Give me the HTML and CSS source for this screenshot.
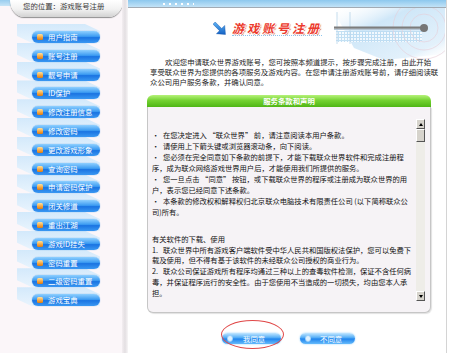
FILE: index.html
```html
<!DOCTYPE html>
<html lang="zh-CN">
<head>
<meta charset="utf-8">
<title>游戏账号注册</title>
<link rel="stylesheet" href="styles.css">
</head>
<body>
<div class="page">
  <aside class="sidebar">
    <div class="location"><div class="loc-tab">您的位置：游戏账号注册</div></div>
    <ul class="menu">
      <li><span class="dot"></span>用户指南</li>
      <li><span class="dot"></span>账号注册</li>
      <li><span class="dot"></span>靓号申请</li>
      <li><span class="dot"></span>ID保护</li>
      <li><span class="dot"></span>修改注册信息</li>
      <li><span class="dot"></span>修改密码</li>
      <li><span class="dot"></span>更改游戏形象</li>
      <li><span class="dot"></span>查询密码</li>
      <li><span class="dot"></span>申请密码保护</li>
      <li><span class="dot"></span>闭关修道</li>
      <li><span class="dot"></span>重出江湖</li>
      <li><span class="dot"></span>游戏ID挂失</li>
      <li><span class="dot"></span>密码重置</li>
      <li><span class="dot"></span>二级密码重置</li>
      <li><span class="dot"></span>游戏宝典</li>
    </ul>
  </aside>
  <div class="divider"></div>
  <main class="main">
    <div class="topbar"><span class="dots"></span></div>
    <div class="title-row">
      <svg class="arrow" width="13" height="13" viewBox="0 0 12 12">
        <defs>
          <linearGradient id="ag" x1="0" y1="0" x2="0" y2="1">
            <stop offset="0" stop-color="#5fb4f5"/>
            <stop offset="1" stop-color="#1462c4"/>
          </linearGradient>
        </defs>
        <polygon points="0,2 2,0 8,6 10.8,3.2 11.5,11.5 3.2,10.8 6,8" fill="url(#ag)" stroke="#0d4fa8" stroke-width="0.4"/>
      </svg>
      <h1 class="title">游戏账号注册</h1>
      <svg class="deco" width="121" height="52" viewBox="0 0 121 52">
        <defs>
          <linearGradient id="sweep" x1="0" y1="0" x2="1" y2="1">
            <stop offset="0" stop-color="#ffffff" stop-opacity="0"/>
            <stop offset="0.35" stop-color="#cfe7f8"/>
            <stop offset="0.8" stop-color="#e3f1fb"/>
            <stop offset="1" stop-color="#ffffff" stop-opacity="0"/>
          </linearGradient>
          <pattern id="grid" width="3" height="3" patternUnits="userSpaceOnUse">
            <rect width="3" height="3" fill="#bcdcf2"/>
            <rect width="2" height="2" fill="#f4faff"/>
          </pattern>
        </defs>
        <polygon points="8,0 121,0 121,46 60,52 30,40" fill="url(#sweep)"/>
        <rect x="12" y="23" width="86" height="11" fill="url(#grid)" opacity="0.9"/>
        <line x1="13" y1="4" x2="13" y2="36" stroke="#b9d5ea" stroke-width="0.8"/>
        <line x1="26" y1="4" x2="26" y2="36" stroke="#b9d5ea" stroke-width="0.8"/>
        <circle cx="100" cy="20" r="14" fill="none" stroke="#e6cdd6" stroke-width="0.6"/>
        <circle cx="100" cy="20" r="22" fill="none" stroke="#e6cdd6" stroke-width="0.6"/>
        <circle cx="100" cy="20" r="31" fill="none" stroke="#e6cdd6" stroke-width="0.6"/>
        <rect x="10" y="18.5" width="88" height="2.2" fill="#7d7d7d"/>
        <rect x="10" y="21" width="88" height="1" fill="#b7c7d6"/>
        <circle cx="100" cy="20" r="4" fill="#767676"/>
      </svg>
    </div>
    <p class="intro">欢迎您申请联众世界游戏账号，您可按照本频道提示，按步骤完成注册，由此开始<br>享受联众世界为您提供的各项服务及游戏内容。在您申请注册游戏账号前，请仔细阅读联<br>众公司用户服务条款，并确认同意。</p>
    <section class="terms">
      <div class="terms-head">服务条款和声明</div>
      <div class="terms-body">
        <div class="terms-text">
          <div class="group">
            <div class="line">&nbsp;</div>
            <div class="line"><span class="b">•</span>在您决定进入 “联众世界” 前，请注意阅读本用户条款。</div>
            <div class="line"><span class="b">•</span>请使用上下箭头键或浏览器滚动条，向下阅读。</div>
            <div class="line"><span class="b">•</span>您必须在完全同意如下条款的前提下，才能下载联众世界软件和完成注册程</div>
            <div class="line">序，成为联众网络游戏世界用户后，才能使用我们所提供的服务。</div>
            <div class="line"><span class="b">•</span>您一旦点击 “同意” 按钮，或下载联众世界的程序或注册成为联众世界的用</div>
            <div class="line">户，表示您已经同意下述条款。</div>
            <div class="line"><span class="b">•</span>本条款的修改权和解释权归北京联众电脑技术有限责任公司 (以下简称联众公</div>
            <div class="line">司)所有。</div>
          </div>
          <div class="group second">
            <div class="line">有关软件的下载、使用</div>
            <div class="line"><span class="b">1.</span>联众世界中所有游戏客户端软件受中华人民共和国版权法保护，您可以免费下</div>
            <div class="line">载及使用，但不得有基于该软件的未经联众公司授权的商业行为。</div>
            <div class="line"><span class="b">2.</span>联众公司保证游戏所有程序均通过三种以上的查毒软件检测，保证不含任何病</div>
            <div class="line">毒，并保证程序运行的安全性。由于您使用不当造成的一切损失，均由您本人承</div>
            <div class="line">担。</div>
          </div>
        </div>
        <div class="scrollbar">
          <div class="sb-btn"><span class="tri up"></span></div>
          <div class="sb-thumb"></div>
          <div class="sb-track"></div>
          <div class="sb-btn"><span class="tri down"></span></div>
        </div>
      </div>
    </section>
    <div class="actions">
      <button class="btn agree"><span class="bicon"></span>我同意</button>
      <button class="btn disagree"><span class="bicon"></span>不同意</button>
    </div>
  </main>
</div>
</body>
</html>
```

FILE: styles.css
```css
* { box-sizing: border-box; }
html, body {
  margin: 0;
  padding: 0;
  background: #ffffff;
}
body {
  width: 450px;
  height: 353px;
  overflow: hidden;
  font-family: "Noto Sans CJK SC", "Noto Sans", sans-serif;
  color: #111;
}
.page {
  display: flex;
  height: 353px;
}

/* ---------- sidebar ---------- */
.sidebar {
  width: 122px;
  flex: none;
  background: #fbf6f9;
}
.location {
  height: 19px;
  padding-left: 10px;
  background: linear-gradient(to bottom, #98cdef 0, #c7e5f7 6px, #fbf6f9 6px);
}
.loc-tab {
  height: 17px;
  width: 113px;
  padding-left: 13px;
  border-radius: 0 0 14px 14px / 0 0 17px 17px;
  background: linear-gradient(to bottom, #ffffff 0, #f1f1f1 55%, #d2d2d2 100%);
  box-shadow: 0 1px 1px #8e8e8e;
  font-size: 7.4px;
  line-height: 12px;
  color: #3a3a3a;
  white-space: nowrap;
}
.menu {
  list-style: none;
  margin: 0;
  padding: 12px 0 0 32px;
  position: relative;
  z-index: 0;
}
.menu li {
  position: relative;
  display: flex;
  align-items: center;
  gap: 5px;
  width: 68px;
  height: 12px;
  margin-bottom: 6.8px;
  padding-left: 5px;
  border-radius: 6px;
  background: linear-gradient(to bottom, #8fd0ff 0, #3d9cf2 45%, #1a74e2 55%, #3a98f2 100%);
  box-shadow: 0 0 1px #3f8fe0;
  color: #ffffff;
  font-size: 7.4px;
  line-height: 12px;
  white-space: nowrap;
}
.menu li::before {
  content: "";
  position: absolute;
  left: -15px;
  top: -7px;
  width: 83px;
  height: 19px;
  background: linear-gradient(to bottom, #d3e9fb, #e9f4fd);
  clip-path: polygon(0 0, 68px 0, 83px 7px, 83px 19px, 15px 19px, 0 12px);
  z-index: -1;
}
.dot {
  width: 6px;
  height: 6px;
  flex: none;
  border-radius: 1.5px;
  background: linear-gradient(to bottom, #ffe2a0, #f4a23a 60%, #e07c10);
}

.divider {
  width: 6px;
  flex: none;
  background: linear-gradient(to right, #f3eef1, #e3dfe2 50%, #f7f5f6);
}

/* ---------- main ---------- */
.main {
  width: 319px;
  flex: none;
  border-right: 1px solid #d4d4d4;
}
.topbar {
  height: 8px;
  padding-top: 3px;
  background: linear-gradient(to bottom, #8dc8ee, #c2e3f7);
  border-bottom: 1px solid #a2abb4;
}
.dots {
  display: block;
  width: 31px;
  height: 2px;
  margin-left: 35px;
  background: repeating-linear-gradient(to right, #ffffff 0 1.5px, transparent 1.5px 6px);
}
.title-row {
  display: flex;
  align-items: center;
  height: 40px;
  padding-left: 85px;
}
.arrow {
  flex: none;
  margin-right: 6px;
}
.title {
  margin: 0;
  font-size: 12px;
  line-height: 13px;
  font-weight: 700;
  font-style: italic;
  letter-spacing: 3px;
  color: #ec3b2e;
  border-bottom: 1px dotted #8cc6ee;
  padding-bottom: 1px;
  white-space: nowrap;
  text-shadow: -1px 0 #fff, 1px 0 #fff, 0 -1px #fff, 0 1px #fff, 1px 1px 1px #b84a44;
}
.deco {
  flex: none;
  align-self: flex-start;
  margin-left: auto;
  margin-right: 1px;
}
.intro {
  margin: 9px 0 0 22px;
  font-size: 7.4px;
  line-height: 10px;
  text-indent: 15px;
  color: #222;
  white-space: nowrap;
}

.terms {
  width: 284px;
  margin: 8px 0 0 19px;
}
.terms-head {
  height: 12px;
  border-radius: 6px 6px 0 0;
  background: linear-gradient(to bottom, #b6f27a 0, #74d232 45%, #4fb615 100%);
  color: #ffffff;
  font-size: 7.4px;
  font-weight: 700;
  line-height: 12px;
  text-align: center;
}
.terms-body {
  display: flex;
  height: 206px;
  padding: 12px 5px 0 4px;
  border: 1px solid #c6c6c6;
  border-top: none;
  border-radius: 0 0 6px 6px;
  background: #f6f3f6;
  box-shadow: 1px 1px 1px #e2e2e2;
}
.terms-text {
  flex: 1;
  overflow: hidden;
  font-size: 7.3px;
  line-height: 11px;
  color: #111;
  white-space: nowrap;
}
.group.second {
  margin-top: 16px;
  line-height: 10.7px;
}
.b {
  display: inline-block;
  width: 11px;
}
.scrollbar {
  display: flex;
  flex-direction: column;
  width: 9px;
  height: 182px;
  flex: none;
}
.sb-btn, .sb-thumb {
  background: #d6d3cc;
  border: 1px solid;
  border-color: #ffffff #555555 #555555 #ffffff;
}
.sb-btn {
  height: 10px;
  display: flex;
  align-items: center;
  justify-content: center;
}
.sb-thumb {
  height: 13px;
}
.sb-track {
  flex: 1;
  background: #eeede8;
}
.tri {
  width: 0;
  height: 0;
  border-left: 2.5px solid transparent;
  border-right: 2.5px solid transparent;
}
.tri.up { border-bottom: 3px solid #000; }
.tri.down { border-top: 3px solid #000; }

/* ---------- buttons ---------- */
.actions {
  display: flex;
  gap: 19px;
  margin: 20px 0 0 94px;
}
.btn {
  display: flex;
  align-items: center;
  gap: 7px;
  height: 11px;
  padding: 0 0 0 5px;
  border: none;
  border-radius: 6px;
  background: linear-gradient(to bottom, #c2e6ff 0, #5ab1f7 40%, #2185ee 55%, #66bbfb 100%);
  box-shadow: 0 0 2px #8ccdfd;
  color: #ffffff;
  font-family: "Noto Sans CJK SC", sans-serif;
  font-size: 7.4px;
  line-height: 11px;
}
.agree {
  position: relative;
  width: 59px;
}
.agree .bicon { margin-right: 3px; }
.disagree {
  width: 55px;
}
.disagree .bicon { margin-right: 2px; }
.agree::after {
  content: "";
  position: absolute;
  left: -1px;
  top: -13px;
  width: 61px;
  height: 27px;
  border: 1px solid #e04848;
  border-radius: 50%;
}
.bicon {
  width: 6px;
  height: 7px;
  flex: none;
  border-radius: 3px;
  background: linear-gradient(to right, #dff1ff 0 40%, #2f7ed0 40% 60%, #dff1ff 60%);
  border: 1px solid #9fd2fb;
}
```
